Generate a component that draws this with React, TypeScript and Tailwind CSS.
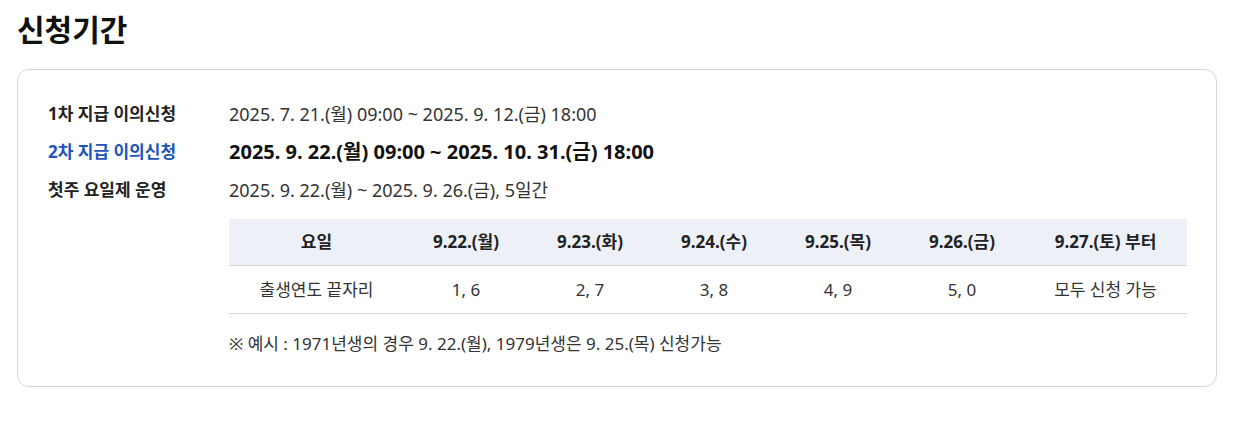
import React from "react";

const font = { fontFamily: '"Noto Sans", "Noto Sans CJK KR", sans-serif' };

const heads = ["요일", "9.22.(월)", "9.23.(화)", "9.24.(수)", "9.25.(목)", "9.26.(금)", "9.27.(토) 부터"];
const body = ["출생연도 끝자리", "1, 6", "2, 7", "3, 8", "4, 9", "5, 0", "모두 신청 가능"];

export default function App() {
  return (
    <div className="w-[1248px] h-[446px] bg-white pl-[17px] pt-[8px] text-[#222]" style={font}>
      <h2 className="text-[30px] font-bold leading-[44px] text-[#111]">신청기간</h2>
      <div className="mt-[17px] w-[1200px] rounded-[12px] border border-[#d6d6d6] pl-[30px] pr-[29px] pt-[32px] pb-[30px]">
        <div className="flex flex-col gap-[14px]">
          <div className="flex items-center h-[24px]">
            <div className="w-[181px] shrink-0 text-[17px] font-bold text-[#222]">1차 지급 이의신청</div>
            <div className="text-[18px] text-[#333]">2025. 7. 21.(월) 09:00 ~ 2025. 9. 12.(금) 18:00</div>
          </div>
          <div className="flex items-center h-[24px]">
            <div className="w-[181px] shrink-0 text-[17px] font-bold text-[#1c54b8]">2차 지급 이의신청</div>
            <div className="text-[20px] font-bold text-[#111]">2025. 9. 22.(월) 09:00 ~ 2025. 10. 31.(금) 18:00</div>
          </div>
          <div className="flex items-center h-[24px]">
            <div className="w-[181px] shrink-0 text-[17px] font-bold text-[#222]">첫주 요일제 운영</div>
            <div className="text-[18px] text-[#333]">2025. 9. 22.(월) ~ 2025. 9. 26.(금), 5일간</div>
          </div>
        </div>
        <div className="ml-[181px] mt-[17px]">
          <div className="grid grid-cols-[175px_124px_124px_124px_124px_124px_1fr] bg-[#edf1f7] h-[47px] items-center border-b border-[#d6d6d6]">
            {heads.map((h) => (
              <div key={h} className="text-center text-[17px] font-bold text-[#222]">{h}</div>
            ))}
          </div>
          <div className="grid grid-cols-[175px_124px_124px_124px_124px_124px_1fr] h-[48px] items-center border-b border-[#d6d6d6]">
            {body.map((b) => (
              <div key={b} className="text-center text-[17px] text-[#333]">{b}</div>
            ))}
          </div>
          <div className="mt-[18px] text-[17px] leading-[24px] text-[#333]">
            ※ 예시 : 1971년생의 경우 9. 22.(월), 1979년생은 9. 25.(목) 신청가능
          </div>
        </div>
      </div>
    </div>
  );
}
